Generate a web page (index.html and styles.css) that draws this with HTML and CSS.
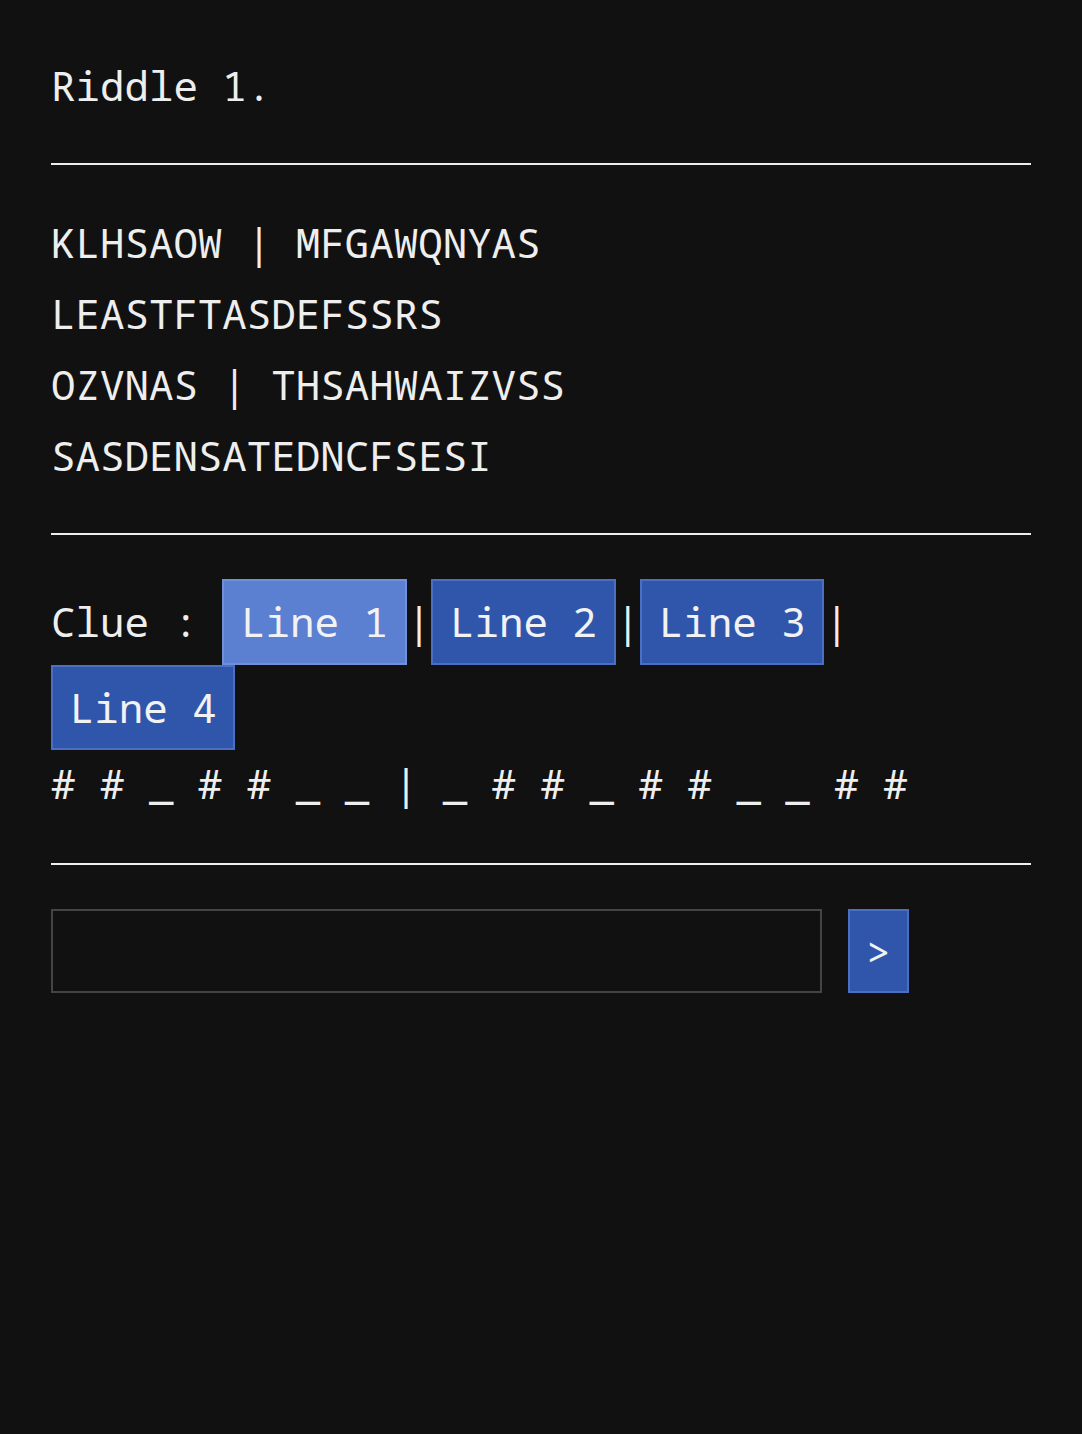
FILE: index.html
```html
<!DOCTYPE html>
<html lang="en">
<head>
<meta charset="utf-8">
<title>Riddle 1.</title>
<link rel="stylesheet" href="styles.css">
</head>
<body>
<main class="page">
  <div class="title">Riddle 1.</div>
  <hr class="rule rule-after-title">
  <div class="riddle">
    <div class="line">KLHSAOW | MFGAWQNYAS</div>
    <div class="line">LEASTFTASDEFSSRS</div>
    <div class="line">OZVNAS | THSAHWAIZVSS</div>
    <div class="line">SASDENSATEDNCFSESI</div>
  </div>
  <hr class="rule rule-after-riddle">
  <div class="clue">Clue : <button class="btn btn-active">Line 1</button>|<button class="btn">Line 2</button>|<button class="btn">Line 3</button>|<button class="btn">Line 4</button></div>
  <div class="line pattern">#&nbsp;#&nbsp;_&nbsp;#&nbsp;#&nbsp;_&nbsp;_&nbsp;|&nbsp;_&nbsp;#&nbsp;#&nbsp;_&nbsp;#&nbsp;#&nbsp;_&nbsp;_&nbsp;#&nbsp;#</div>
  <hr class="rule rule-after-pattern">
  <form class="answer" onsubmit="return false;">
    <input class="answer-input" type="text" aria-label="Answer">
    <button class="btn btn-submit" type="submit">&gt;</button>
  </form>
</main>
</body>
</html>
```

FILE: styles.css
```css
html, body {
  margin: 0;
  padding: 0;
  background: #111111;
}

body {
  color: #eeeeee;
  font-family: "Noto Sans Mono", "DejaVu Sans Mono", "Liberation Mono", monospace;
  font-size: 40.8px;
}

.page {
  padding: 50px 51px 51px;
}

.title,
.line {
  line-height: 71px;
  white-space: nowrap;
}

.rule {
  border: none;
  height: 2px;
  background: #eeeeee;
  margin: 41px 0 44px;
}

.rule-after-title {
  margin-top: 42px;
  margin-bottom: 42px;
}

.rule-after-riddle {
  margin-top: 42px;
}

.rule-after-pattern {
  margin-top: 44px;
}

.pattern {
  margin-top: -2px;
}

.clue {
  line-height: 71px;
}

.btn {
  display: inline-block;
  font-family: inherit;
  font-size: inherit;
  line-height: 47px;
  color: #f2f2f2;
  background: #3056ab;
  border: 2px solid #4b6fc2;
  padding: 17.25px 16.75px;
  margin: 0;
  vertical-align: baseline;
  cursor: pointer;
}

.btn-active {
  background: #5b7fd1;
  border-color: #7090da;
}

.answer {
  display: flex;
  align-items: flex-start;
  gap: 26px;
  margin: 0;
}

.answer-input {
  box-sizing: border-box;
  width: 771px;
  height: 84px;
  margin: 0;
  background: #111111;
  border: 2px solid #444444;
  color: #eeeeee;
  font-family: inherit;
  font-size: inherit;
  padding: 0 16px;
}

.btn-submit {
  box-sizing: border-box;
  width: 61px;
  height: 84px;
  padding: 0;
  text-align: center;
}
```
